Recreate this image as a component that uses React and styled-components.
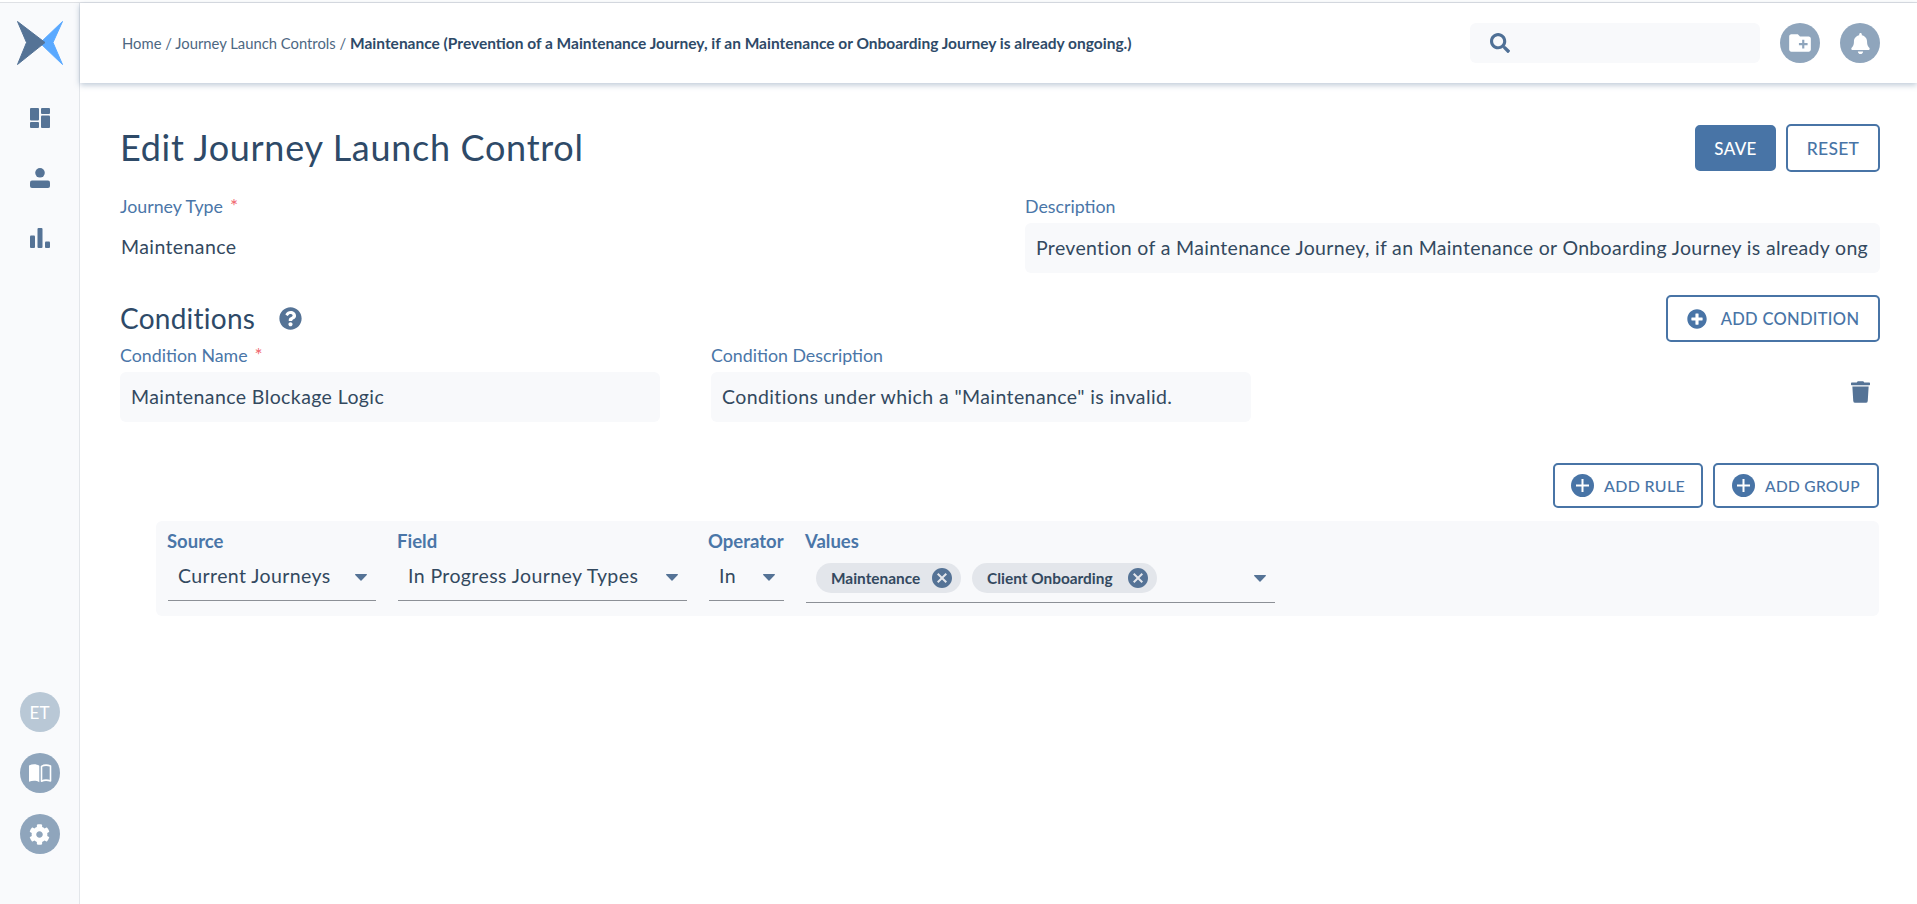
import React from "react";
import styled, { createGlobalStyle } from "styled-components";
import { FaSearch, FaBell, FaCog, FaTrash, FaQuestionCircle, FaPlusCircle } from "react-icons/fa";
import { MdCreateNewFolder, MdCancel } from "react-icons/md";

const GlobalStyle = createGlobalStyle`
  html, body {
    margin: 0;
    padding: 0;
    background: #fff;
    font-family: "Lato", "Open Sans", sans-serif;
    color: #2e4a68;
  }
  * { box-sizing: border-box; }
`;

const Page = styled.div`
  height: 904px;
  display: flex;
  flex-direction: column;
  overflow: hidden;
`;

const TopLine = styled.div`
  height: 3px;
  flex: none;
  background: #fff;
  border-bottom: 1px solid #dfe1e5;
`;

const Body = styled.div`
  flex: 1;
  display: flex;
  min-height: 0;
`;

const Sidebar = styled.aside`
  width: 80px;
  flex: none;
  background: #f9fafc;
  border-right: 1px solid #e3e6ea;
  display: flex;
  flex-direction: column;
  align-items: center;
  padding: 18px 0 50px;
`;

const Logo = styled.svg`
  width: 46px;
  height: 44px;
  margin-bottom: 43px;
  margin-left: 1px;
`;

const NavIcon = styled.svg`
  width: 20px;
  height: 20px;
  margin-bottom: 40px;
  fill: #557396;
`;

const SideBottom = styled.div`
  margin-top: auto;
  display: flex;
  flex-direction: column;
  gap: 21px;
`;

const Round = styled.div`
  width: 40px;
  height: 40px;
  border-radius: 50%;
  background: ${(props) => (props.light ? "#b9c8d6" : "#8fa5bc")};
  color: #fff;
  display: flex;
  align-items: center;
  justify-content: center;
  font-size: 17px;
  flex: none;
`;

const Main = styled.div`
  flex: 1;
  min-width: 0;
  display: flex;
  flex-direction: column;
`;

const Header = styled.header`
  height: 80px;
  flex: none;
  background: #fff;
  box-shadow: 0 2px 6px rgba(85, 115, 150, 0.4);
  display: flex;
  align-items: center;
  padding: 0 37px 0 42px;
  gap: 20px;
`;

const Crumbs = styled.div`
  flex: 1;
  font-size: 14.8px;
  color: #4d6782;
  white-space: nowrap;
  padding-bottom: 1px;
`;

const CrumbLast = styled.b`
  font-weight: 700;
  font-size: 15.5px;
  color: #2e4a68;
`;

const Search = styled.div`
  width: 290px;
  height: 40px;
  background: #f8f9fb;
  border-radius: 6px;
  display: flex;
  align-items: center;
  padding-left: 20px;
  color: #4f7096;
  font-size: 20px;
`;

const Content = styled.main`
  flex: 1;
  padding: 41px 37px 0 40px;
`;

const TitleRow = styled.div`
  display: flex;
  align-items: center;
  justify-content: space-between;
  height: 48px;
`;

const Title = styled.h1`
  margin: 0;
  font-size: 36px;
  line-height: 46px;
  padding-bottom: 2px;
  font-weight: 400;
  letter-spacing: 0.7px;
  color: #2e4a68;
`;

const Buttons = styled.div`
  display: flex;
  align-items: center;
  gap: 10px;
  justify-content: flex-end;
  margin-left: ${(props) => (props.push ? "auto" : "0")};
`;

const Button = styled.button`
  height: ${(props) => props.h || 48}px;
  width: ${(props) => props.w}px;
  border: 2px solid #4874a6;
  border-radius: 5px;
  background: ${(props) => (props.primary ? "#4874a6" : "#fff")};
  color: ${(props) => (props.primary ? "#fff" : "#4874a6")};
  font-family: inherit;
  font-size: ${(props) => props.size || 16}px;
  font-weight: 500;
  display: flex;
  align-items: center;
  justify-content: center;
  gap: ${(props) => props.iconGap || 10}px;
  padding: 0;
  letter-spacing: 0.3px;
`;

const JourneyRow = styled.div`
  display: grid;
  grid-template-columns: 905px 1fr;
  margin-top: 25px;
`;

const Label = styled.label`
  display: block;
  height: 20px;
  line-height: 18px;
  font-size: 17.8px;
  color: #4a76a8;
  margin-bottom: 6px;
`;

const Star = styled.span`
  color: #f0656d;
  margin-left: 7px;
  font-size: 19px;
`;

const PlainValue = styled.div`
  height: 50px;
  line-height: 48px;
  font-size: 19.5px;
  letter-spacing: 0.4px;
  padding-left: 1px;
  color: #33495f;
`;

const TextInput = styled.input`
  display: block;
  width: 100%;
  height: 50px;
  border: 0;
  outline: 0;
  border-radius: 6px;
  background: #f8f9fb;
  padding: 0 12px 2px 11px;
  font-family: inherit;
  font-size: 19.5px;
  letter-spacing: ${(props) => props.spacing || 0.4}px;
  color: #33495f;
`;

const ConditionsHead = styled.div`
  display: flex;
  align-items: center;
  margin-top: 22px;
  height: 47px;
`;

const SubTitle = styled.h2`
  margin: 0;
  padding-bottom: 2px;
  font-size: 28px;
  font-weight: 400;
  letter-spacing: 0.25px;
  color: #2e4a68;
`;

const Help = styled(FaQuestionCircle)`
  width: 23px;
  height: 23px;
  margin-left: 24px;
  color: #557396;
`;

const ConditionRow = styled.div`
  display: flex;
  align-items: flex-start;
  gap: 51px;
  margin-top: 4px;
`;

const ConditionField = styled.div`
  width: 540px;
`;

const Trash = styled(FaTrash)`
  width: 19px;
  height: 22px;
  margin: 35px 10px 0 auto;
  color: #557396;
`;

const RuleSection = styled.section`
  margin: 41px 1px 0 0;
`;

const PlusDot = styled.svg`
  width: 23px;
  height: 23px;
  flex: none;
`;

const RuleBox = styled.div`
  margin: 13px 0 0 36px;
  height: 95px;
  padding: 11px 12px 0;
  background: #f8f9fb;
  border-radius: 6px;
  display: flex;
  gap: 22px;
`;

const RuleField = styled.div`
  width: ${(props) => props.width}px;
`;

const RuleLabel = styled.div`
  font-size: 18.5px;
  line-height: 18px;
  font-weight: 700;
  color: #4a76a8;
  margin-left: -1px;
  height: 20px;
`;

const SelectBox = styled.div`
  height: ${(props) => props.h || 49}px;
  border-bottom: 1px solid #8c9096;
  display: flex;
  align-items: center;
  padding: 0 9px 0 ${(props) => props.padLeft || 10}px;
  font-size: 19.5px;
  letter-spacing: 0.4px;
  color: #33495f;
`;

const SelectText = styled.span`
  flex: 1;
  white-space: nowrap;
  padding-bottom: 2px;
`;

const Arrow = styled.svg`
  width: 12px;
  height: 7px;
  flex: none;
  fill: #557396;
  margin-top: 2px;
`;

const Chips = styled.div`
  flex: 1;
  display: flex;
  gap: 11px;
  margin-top: 2px;
`;

const Chip = styled.div`
  width: ${(props) => props.width}px;
  height: 30px;
  border-radius: 15px;
  background: #e3e6eb;
  display: flex;
  align-items: center;
  justify-content: space-between;
  padding: 0 7px 0 15px;
  font-size: 15.4px;
  letter-spacing: 0;
  font-weight: 700;
  color: #33495f;
`;

const ChipClose = styled(MdCancel)`
  width: 24px;
  height: 24px;
  color: #557396;
`;

const BookIcon = styled.svg`
  width: 24px;
  height: 20px;
`;

const CaretDown = () => (
  <Arrow viewBox="0 0 12 7">
    <path d="M0.6 0h10.8c.5 0 .8.6.4 1L6.5 6.6c-.3.3-.7.3-1 0L.2 1C-.2.6.1 0 .6 0z" />
  </Arrow>
);

const ThinPlus = () => (
  <PlusDot viewBox="0 0 23 23">
    <circle cx="11.5" cy="11.5" r="11.5" fill="#4874a6" />
    <path d="M11.5 5v13M5 11.5h13" stroke="#fff" strokeWidth="2" />
  </PlusDot>
);

const App = () => {
  return (
    <Page>
      <GlobalStyle />
      <TopLine />
      <Body>
        <Sidebar>
          <Logo viewBox="0 0 46 44">
            <path d="M45.5 .5L36 21.5 45.5 43.5 23 22z" fill="#5aa9ff" stroke="#5aa9ff" strokeLinejoin="round" />
            <path d="M.5 .5L28 21.5 .5 43.5 9.5 21.5z" fill="#557396" stroke="#557396" strokeLinejoin="round" />
          </Logo>
          <NavIcon viewBox="0 0 20 20">
            <rect x="0" y="0" width="9" height="12.5" rx="1" />
            <rect x="0" y="14" width="9" height="6" rx="1" />
            <rect x="11" y="0" width="9" height="6" rx="1" />
            <rect x="11" y="7.5" width="9" height="12.5" rx="1" />
          </NavIcon>
          <NavIcon viewBox="0 0 20 20">
            <circle cx="10" cy="4.8" r="4.8" />
            <rect x="0" y="12.5" width="20" height="7.5" rx="2" />
          </NavIcon>
          <NavIcon viewBox="0 0 20 20">
            <rect x="0" y="7.5" width="5" height="12.5" rx="1" />
            <rect x="7.5" y="0" width="5" height="20" rx="1" />
            <rect x="15" y="13.5" width="5" height="6.5" rx="1" />
          </NavIcon>
          <SideBottom>
            <Round light>ET</Round>
            <Round>
              <BookIcon viewBox="0 0 24 20">
                <path d="M1 2.5C4.5 .8 8.5 .8 11.3 2.8V19.2C8.5 17.4 4.5 17.4 1 18.8z" fill="#fff" />
                <path d="M13.5 3.4C15.8 2 19.5 1.8 22.5 3V18C19.5 16.9 16 17 13.5 18.2z" fill="none" stroke="#fff" strokeWidth="1.6" strokeLinejoin="round" />
              </BookIcon>
            </Round>
            <Round><FaCog size={21} /></Round>
          </SideBottom>
        </Sidebar>
        <Main>
          <Header>
            <Crumbs>
              Home / Journey Launch Controls /{" "}
              <CrumbLast>Maintenance (Prevention of a Maintenance Journey, if an Maintenance or Onboarding Journey is already ongoing.)</CrumbLast>
            </Crumbs>
            <Search><FaSearch /></Search>
            <Round><MdCreateNewFolder size={26} /></Round>
            <Round><FaBell size={21} /></Round>
          </Header>
          <Content>
            <TitleRow>
              <Title>Edit Journey Launch Control</Title>
              <Buttons>
                <Button primary w={81} h={46} size={17}>SAVE</Button>
                <Button w={94} size={17.5}>RESET</Button>
              </Buttons>
            </TitleRow>

            <JourneyRow>
              <div>
                <Label>Journey Type<Star>*</Star></Label>
                <PlainValue>Maintenance</PlainValue>
              </div>
              <div>
                <Label>Description</Label>
                <TextInput readOnly spacing={0.33} value="Prevention of a Maintenance Journey, if an Maintenance or Onboarding Journey is already ongoing." />
              </div>
            </JourneyRow>

            <ConditionsHead>
              <SubTitle>Conditions</SubTitle>
              <Help />
              <Buttons push>
                <Button w={214} h={47} iconGap={14} size={16.5}>
                  <FaPlusCircle size={20} color="#4874a6" />
                  ADD CONDITION
                </Button>
              </Buttons>
            </ConditionsHead>

            <ConditionRow>
              <ConditionField>
                <Label>Condition Name<Star>*</Star></Label>
                <TextInput readOnly value="Maintenance Blockage Logic" />
              </ConditionField>
              <ConditionField>
                <Label>Condition Description</Label>
                <TextInput readOnly value={'Conditions under which a "Maintenance" is invalid.'} />
              </ConditionField>
              <Trash />
            </ConditionRow>

            <RuleSection>
              <Buttons>
                <Button w={150} h={45}><ThinPlus />ADD RULE</Button>
                <Button w={166} h={45} size={15.5}><ThinPlus />ADD GROUP</Button>
              </Buttons>
              <RuleBox>
                <RuleField width={208}>
                  <RuleLabel>Source</RuleLabel>
                  <SelectBox>
                    <SelectText>Current Journeys</SelectText>
                    <CaretDown />
                  </SelectBox>
                </RuleField>
                <RuleField width={289}>
                  <RuleLabel>Field</RuleLabel>
                  <SelectBox>
                    <SelectText>In Progress Journey Types</SelectText>
                    <CaretDown />
                  </SelectBox>
                </RuleField>
                <RuleField width={75}>
                  <RuleLabel>Operator</RuleLabel>
                  <SelectBox>
                    <SelectText>In</SelectText>
                    <CaretDown />
                  </SelectBox>
                </RuleField>
                <RuleField width={469}>
                  <RuleLabel>Values</RuleLabel>
                  <SelectBox h={51}>
                    <Chips>
                      <Chip width={145}>Maintenance<ChipClose /></Chip>
                      <Chip width={185}>Client Onboarding<ChipClose /></Chip>
                    </Chips>
                    <CaretDown />
                  </SelectBox>
                </RuleField>
              </RuleBox>
            </RuleSection>
          </Content>
        </Main>
      </Body>
    </Page>
  );
};

export default App;
